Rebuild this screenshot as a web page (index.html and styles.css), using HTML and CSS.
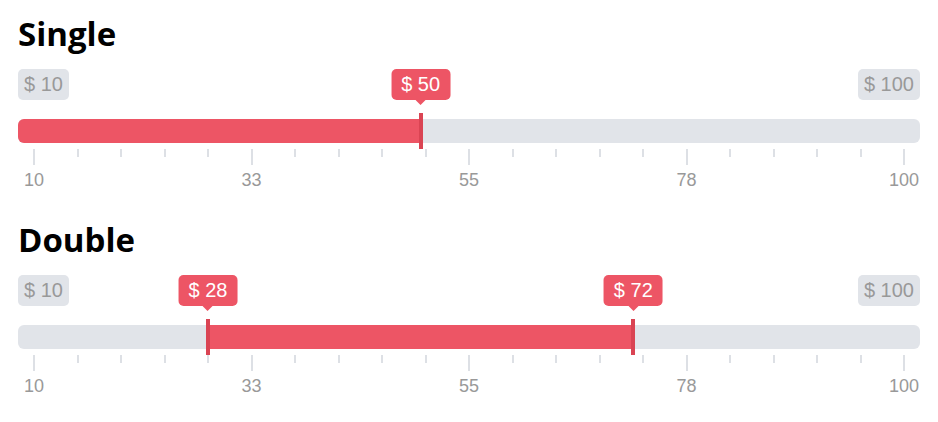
FILE: index.html
```html
<!DOCTYPE html>
<html lang="en">
<head>
<meta charset="utf-8">
<title>Range sliders</title>
<link rel="stylesheet" href="styles.css">
</head>
<body>
<main class="page">
  <section class="demo">
    <h2 class="demo-title">Single</h2>
    <div class="range range--single" style="--from:0; --to:0.4444">
      <div class="range-labels">
        <span class="range-edge">$ 10</span>
        <span class="range-edge">$ 100</span>
        <div class="range-tips">
          <span class="range-tip" style="--at:0.4444">$ 50</span>
        </div>
      </div>
      <div class="range-track">
        <div class="range-fill"></div>
        <div class="range-handles">
          <span class="range-handle" style="--at:0.4444"></span>
        </div>
      </div>
      <div class="range-ticks">
        <i class="tick tick--major"></i><i class="tick"></i><i class="tick"></i><i class="tick"></i><i class="tick"></i>
        <i class="tick tick--major"></i><i class="tick"></i><i class="tick"></i><i class="tick"></i><i class="tick"></i>
        <i class="tick tick--major"></i><i class="tick"></i><i class="tick"></i><i class="tick"></i><i class="tick"></i>
        <i class="tick tick--major"></i><i class="tick"></i><i class="tick"></i><i class="tick"></i><i class="tick"></i>
        <i class="tick tick--major"></i>
      </div>
      <div class="range-scale">
        <span class="scale-num"><span>10</span></span>
        <span class="scale-num"><span>33</span></span>
        <span class="scale-num"><span>55</span></span>
        <span class="scale-num"><span>78</span></span>
        <span class="scale-num"><span>100</span></span>
      </div>
    </div>
  </section>

  <section class="demo">
    <h2 class="demo-title">Double</h2>
    <div class="range range--double" style="--from:0.2; --to:0.6889">
      <div class="range-labels">
        <span class="range-edge">$ 10</span>
        <span class="range-edge">$ 100</span>
        <div class="range-tips">
          <span class="range-tip" style="--at:0.2">$ 28</span>
          <span class="range-tip" style="--at:0.6889">$ 72</span>
        </div>
      </div>
      <div class="range-track">
        <div class="range-fill"></div>
        <div class="range-handles">
          <span class="range-handle" style="--at:0.2"></span>
          <span class="range-handle" style="--at:0.6889"></span>
        </div>
      </div>
      <div class="range-ticks">
        <i class="tick tick--major"></i><i class="tick"></i><i class="tick"></i><i class="tick"></i><i class="tick"></i>
        <i class="tick tick--major"></i><i class="tick"></i><i class="tick"></i><i class="tick"></i><i class="tick"></i>
        <i class="tick tick--major"></i><i class="tick"></i><i class="tick"></i><i class="tick"></i><i class="tick"></i>
        <i class="tick tick--major"></i><i class="tick"></i><i class="tick"></i><i class="tick"></i><i class="tick"></i>
        <i class="tick tick--major"></i>
      </div>
      <div class="range-scale">
        <span class="scale-num"><span>10</span></span>
        <span class="scale-num"><span>33</span></span>
        <span class="scale-num"><span>55</span></span>
        <span class="scale-num"><span>78</span></span>
        <span class="scale-num"><span>100</span></span>
      </div>
    </div>
  </section>
</main>
</body>
</html>
```
FILE: styles.css
```css
* { box-sizing: border-box; }

html, body {
  margin: 0;
  padding: 0;
  background: #fff;
}

body {
  font-family: "Liberation Sans", Arial, sans-serif;
  color: #000;
}

.page {
  padding: 0 18px;
}

.demo {
  height: 206px;
  padding-top: 14px;
}

.demo-title {
  margin: 0;
  font-family: "Open Sans", "Noto Sans", sans-serif;
  font-weight: 700;
  font-size: 33px;
  line-height: 40px;
  height: 40px;
}

/* slider */
.range {
  margin-top: 15px;
}

.range-labels {
  position: relative;
  display: flex;
  justify-content: space-between;
  align-items: flex-start;
  height: 31px;
}

.range-edge,
.range-tip {
  font-size: 20px;
  line-height: 23px;
  padding: 4px 6px;
  border-radius: 5px;
  white-space: nowrap;
}

.range-edge {
  background: #e1e4e9;
  color: #999;
}

.range-tips {
  position: absolute;
  top: 0;
  bottom: 0;
  left: 16px;
  right: 16px;
}

.range-tip {
  position: absolute;
  top: 0;
  left: calc(var(--at) * 100%);
  transform: translateX(-50%);
  padding: 4px 10px;
  background: #ed5565;
  color: #fff;
}

.range-tip::after {
  content: "";
  position: absolute;
  left: 50%;
  top: 100%;
  margin-left: -5px;
  border: 5px solid transparent;
  border-top-color: #ed5565;
  border-bottom: 0;
}

.range-track {
  position: relative;
  margin-top: 19px;
  height: 24px;
  background: #e1e4e9;
  border-radius: 6px;
}

.range-fill {
  position: absolute;
  top: 0;
  bottom: 0;
  background: #ed5565;
  left: calc(16px + var(--from) * (100% - 32px));
  width: calc((var(--to) - var(--from)) * (100% - 32px));
}

.range--single .range-fill {
  left: 0;
  width: calc(16px + var(--to) * (100% - 32px));
  border-radius: 6px 0 0 6px;
}

.range-handles {
  position: absolute;
  top: -6px;
  bottom: -6px;
  left: 16px;
  right: 16px;
}

.range-handle {
  position: absolute;
  top: 0;
  bottom: 0;
  width: 4px;
  margin-left: -2px;
  left: calc(var(--at) * 100%);
  background: #da4453;
}

/* grid */
.range-ticks {
  display: flex;
  justify-content: space-between;
  align-items: flex-start;
  margin: 6px 15px 0;
  height: 16px;
}

.tick {
  display: block;
  width: 2px;
  height: 8px;
  background: #dde0e5;
}

.tick--major {
  height: 16px;
}

.range-scale {
  display: flex;
  justify-content: space-between;
  margin: 5px 15px 0;
}

.scale-num {
  display: flex;
  justify-content: center;
  width: 2px;
  font-size: 18px;
  line-height: 21px;
  color: #999;
  white-space: nowrap;
}
```
